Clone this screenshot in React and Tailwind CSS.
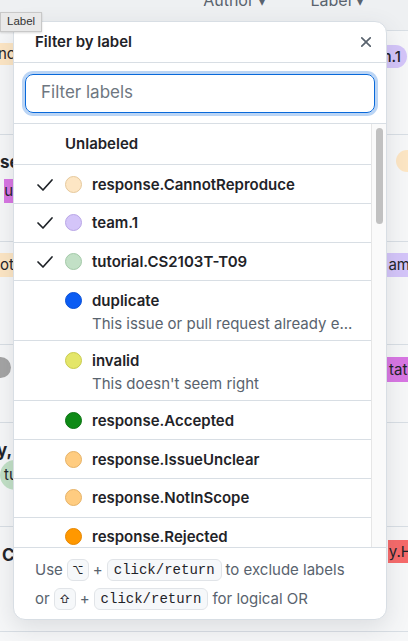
import React from "react";

const labels = [
  { name: "response.CannotReproduce", color: "#fde6c4", ring: "#e6c99c", checked: true },
  { name: "team.1", color: "#d4c5f9", ring: "#b9a6e6", checked: true },
  { name: "tutorial.CS2103T-T09", color: "#c2e0c6", ring: "#a3c9a8", checked: true },
  { name: "duplicate", color: "#0b5cf3", ring: "#0a50d6", desc: "This issue or pull request already e..." },
  { name: "invalid", color: "#e4e669", ring: "#c9cb4e", desc: "This doesn't seem right" },
  { name: "response.Accepted", color: "#0e8a16", ring: "#0b7412" },
  { name: "response.IssueUnclear", color: "#ffcc80", ring: "#e6b266" },
  { name: "response.NotInScope", color: "#ffcc80", ring: "#e6b266" },
  { name: "response.Rejected", color: "#ff9800", ring: "#e68600" },
];

function Check() {
  return (
    <svg width="18" height="14" viewBox="0 0 18 14" fill="none">
      <polyline points="2,7 7,12 16,2" stroke="#1f2328" strokeWidth="1.7" strokeLinecap="round" strokeLinejoin="round" />
    </svg>
  );
}

function CloseIcon() {
  return (
    <svg width="18" height="18" viewBox="0 0 16 16" fill="#59636e">
      <path d="M3.72 3.72a.75.75 0 0 1 1.06 0L8 6.94l3.22-3.22a.749.749 0 0 1 1.275.326.749.749 0 0 1-.215.734L9.06 8l3.22 3.22a.749.749 0 0 1-.326 1.275.749.749 0 0 1-.734-.215L8 9.06l-3.22 3.22a.751.751 0 0 1-1.042-.018.751.751 0 0 1-.018-1.042L6.94 8 3.72 4.78a.75.75 0 0 1 0-1.06Z" />
    </svg>
  );
}

function Kbd({ children, mono }) {
  return (
    <span
      className={
        "inline-flex items-center justify-center h-[22px] rounded-[6px] border border-[#e1e4e8] bg-[#f6f8fa] text-[#1f2328] " +
        (mono ? "px-[6px] text-[14px] font-['Liberation_Mono',monospace]" : "w-[22px] text-[11px]")
      }
    >
      {children}
    </span>
  );
}

function Background() {
  return (
    <div className="w-full text-[#1f2328]">
      <div className="h-[31px] bg-[#eef0f2] border-b border-[#d8dee4] flex justify-end gap-[44px] pr-[44px] text-[16px] text-[#59636e] overflow-hidden">
        <span className="-mt-[12px]">Author ▾</span>
        <span className="-mt-[12px]">Label ▾</span>
      </div>
      <div className="h-[104px] border-b border-[#d8dee4] flex justify-between items-start pt-[12px]">
        <span className="-ml-[4px] rounded-r-[4px] bg-[#fde6c4] px-[2px] h-[22px] leading-[22px] text-[15px]">nc</span>
        <span className="mt-[2px] mr-[1px] rounded-full bg-[#d4c5f9] pl-[10px] pr-[6px] h-[23px] leading-[23px] text-[15px] font-medium">team.1</span>
      </div>
      <div className="h-[107px] border-b border-[#d8dee4] flex justify-between items-start">
        <div className="flex flex-col items-end pt-[16px]">
          <span className="text-[17px] font-bold leading-[22px] -mr-[1px]">se</span>
          <span className="mt-[6px] bg-[#d876e3] h-[24px] leading-[24px] text-[15px]">ur</span>
        </div>
        <span className="mt-[15px] -mr-[10px] w-[22px] h-[22px] rounded-full bg-[#fde6c4]" />
      </div>
      <div className="h-[103px] border-b border-[#d8dee4] flex justify-between items-start pt-[11px]">
        <span className="bg-[#fde6c4] h-[24px] leading-[24px] text-[15px]">ot</span>
        <span className="bg-[#d4c5f9] h-[24px] leading-[24px] text-[15px] pl-[2px] pr-[2px] -mr-[4px]">am</span>
      </div>
      <div className="h-[78px] border-b border-[#d8dee4] flex justify-between items-start pt-[12px]">
        <span className="-ml-[10px] w-[21px] h-[21px] rounded-full bg-[#a4a4a4]" />
        <span className="bg-[#d876e3] h-[25px] leading-[25px] text-[15px] pl-[2px] -mr-[3px]">tati</span>
      </div>
      <div className="h-[104px] border-b border-[#d8dee4] flex justify-between items-start">
        <div className="flex flex-col items-start pt-[16px]">
          <span className="text-[17px] font-bold leading-[22px] ml-[-3px]">y,</span>
          <span className="mt-[-1px] rounded-l-full bg-[#c2e0c6] h-[30px] leading-[30px] text-[15px] pl-[4px] pr-[6px]">tu</span>
        </div>
      </div>
      <div className="h-[105px] border-b border-[#d8dee4] flex justify-between items-start">
        <span className="mt-[17px] ml-[2px] text-[17px] font-bold leading-[22px]">C</span>
        <span className="mt-[13px] bg-[#f66a6a] h-[23px] leading-[23px] text-[15px] pl-[1px] -mr-[4px]">y.H</span>
      </div>
      <div className="h-[40px]" />
    </div>
  );
}

export default function App() {
  return (
    <div className="relative w-[408px] h-[641px] overflow-hidden bg-[#f6f7f8] font-['Inter',sans-serif]">
      <Background />

      <div className="absolute left-[13px] top-[21px] w-[374px] h-[599px] rounded-[12px] border border-[#d8dee4] bg-white shadow-[0_8px_24px_rgba(66,74,83,0.14)] flex flex-col overflow-hidden text-[#1f2328]">
        <div className="h-[41px] shrink-0 flex items-center justify-between pl-[21px] pr-[11px] border-b border-[#d8dee4]">
          <span className="text-[15px] font-semibold">Filter by label</span>
          <CloseIcon />
        </div>

        <div className="h-[61px] shrink-0 px-[11px] flex items-center border-b border-[#d8dee4]">
          <div className="w-full h-[39px] rounded-[8px] border-[1.5px] border-[#0969da] shadow-[0_0_0_3px_rgba(9,105,218,0.28)] flex items-center pl-[15px] text-[17px] text-[#6e7781]">
            Filter labels
          </div>
        </div>

        <div className="flex-1 flex min-h-0">
          <div className="flex-1 overflow-hidden">
            <div className="h-[41px] border-b border-[#d8dee4] flex items-center pl-[51px] text-[15px] font-semibold">
              Unlabeled
            </div>
            {labels.map((l) => (
              <div
                key={l.name}
                className={
                  "border-b border-[#d8dee4] flex items-start pl-[22px] pt-[9.5px] " +
                  (l.desc ? "h-[60px]" : "h-[38.75px]")
                }
              >
                <div className="w-[29px] h-[20px] flex items-center">
                  {l.checked && <Check />}
                </div>
                <div
                  className="w-[17px] h-[17px] mt-[1px] rounded-full border shrink-0"
                  style={{ backgroundColor: l.color, borderColor: l.ring }}
                />
                <div className="ml-[10px] flex flex-col">
                  <span className="text-[15px] font-semibold leading-[20px]">{l.name}</span>
                  {l.desc && (
                    <span className="text-[15px] leading-[20px] text-[#59636e] mt-[3px] whitespace-nowrap">{l.desc}</span>
                  )}
                </div>
              </div>
            ))}
          </div>
          <div className="w-[15px] shrink-0 border-l border-[#e6e6e6] bg-[#fafafa] pt-[4px] flex justify-center">
            <div className="w-[7px] h-[96px] rounded-full bg-[#c1c1c1]" />
          </div>
        </div>

        <div className="h-[72px] shrink-0 border-t border-[#d8dee4] flex flex-col justify-center pt-[2px] pl-[21px] text-[15px] text-[#59636e]">
          <div className="h-[29px] flex items-center gap-[4px]">
            <span>Use</span>
            <Kbd>⌥</Kbd>
            <span>+</span>
            <Kbd mono>click/return</Kbd>
            <span>to exclude labels</span>
          </div>
          <div className="h-[29px] flex items-center gap-[4px]">
            <span>or</span>
            <Kbd>⇧</Kbd>
            <span>+</span>
            <Kbd mono>click/return</Kbd>
            <span>for logical OR</span>
          </div>
        </div>
      </div>

      <div className="absolute left-0 top-[12px] h-[20px] px-[6px] flex items-center bg-[#e9e9e9] border border-[#c8c8c8] text-[11.5px] text-[#333] font-['Liberation_Sans',sans-serif] shadow-[0_1px_2px_rgba(0,0,0,0.15)]">
        Label
      </div>
    </div>
  );
}
